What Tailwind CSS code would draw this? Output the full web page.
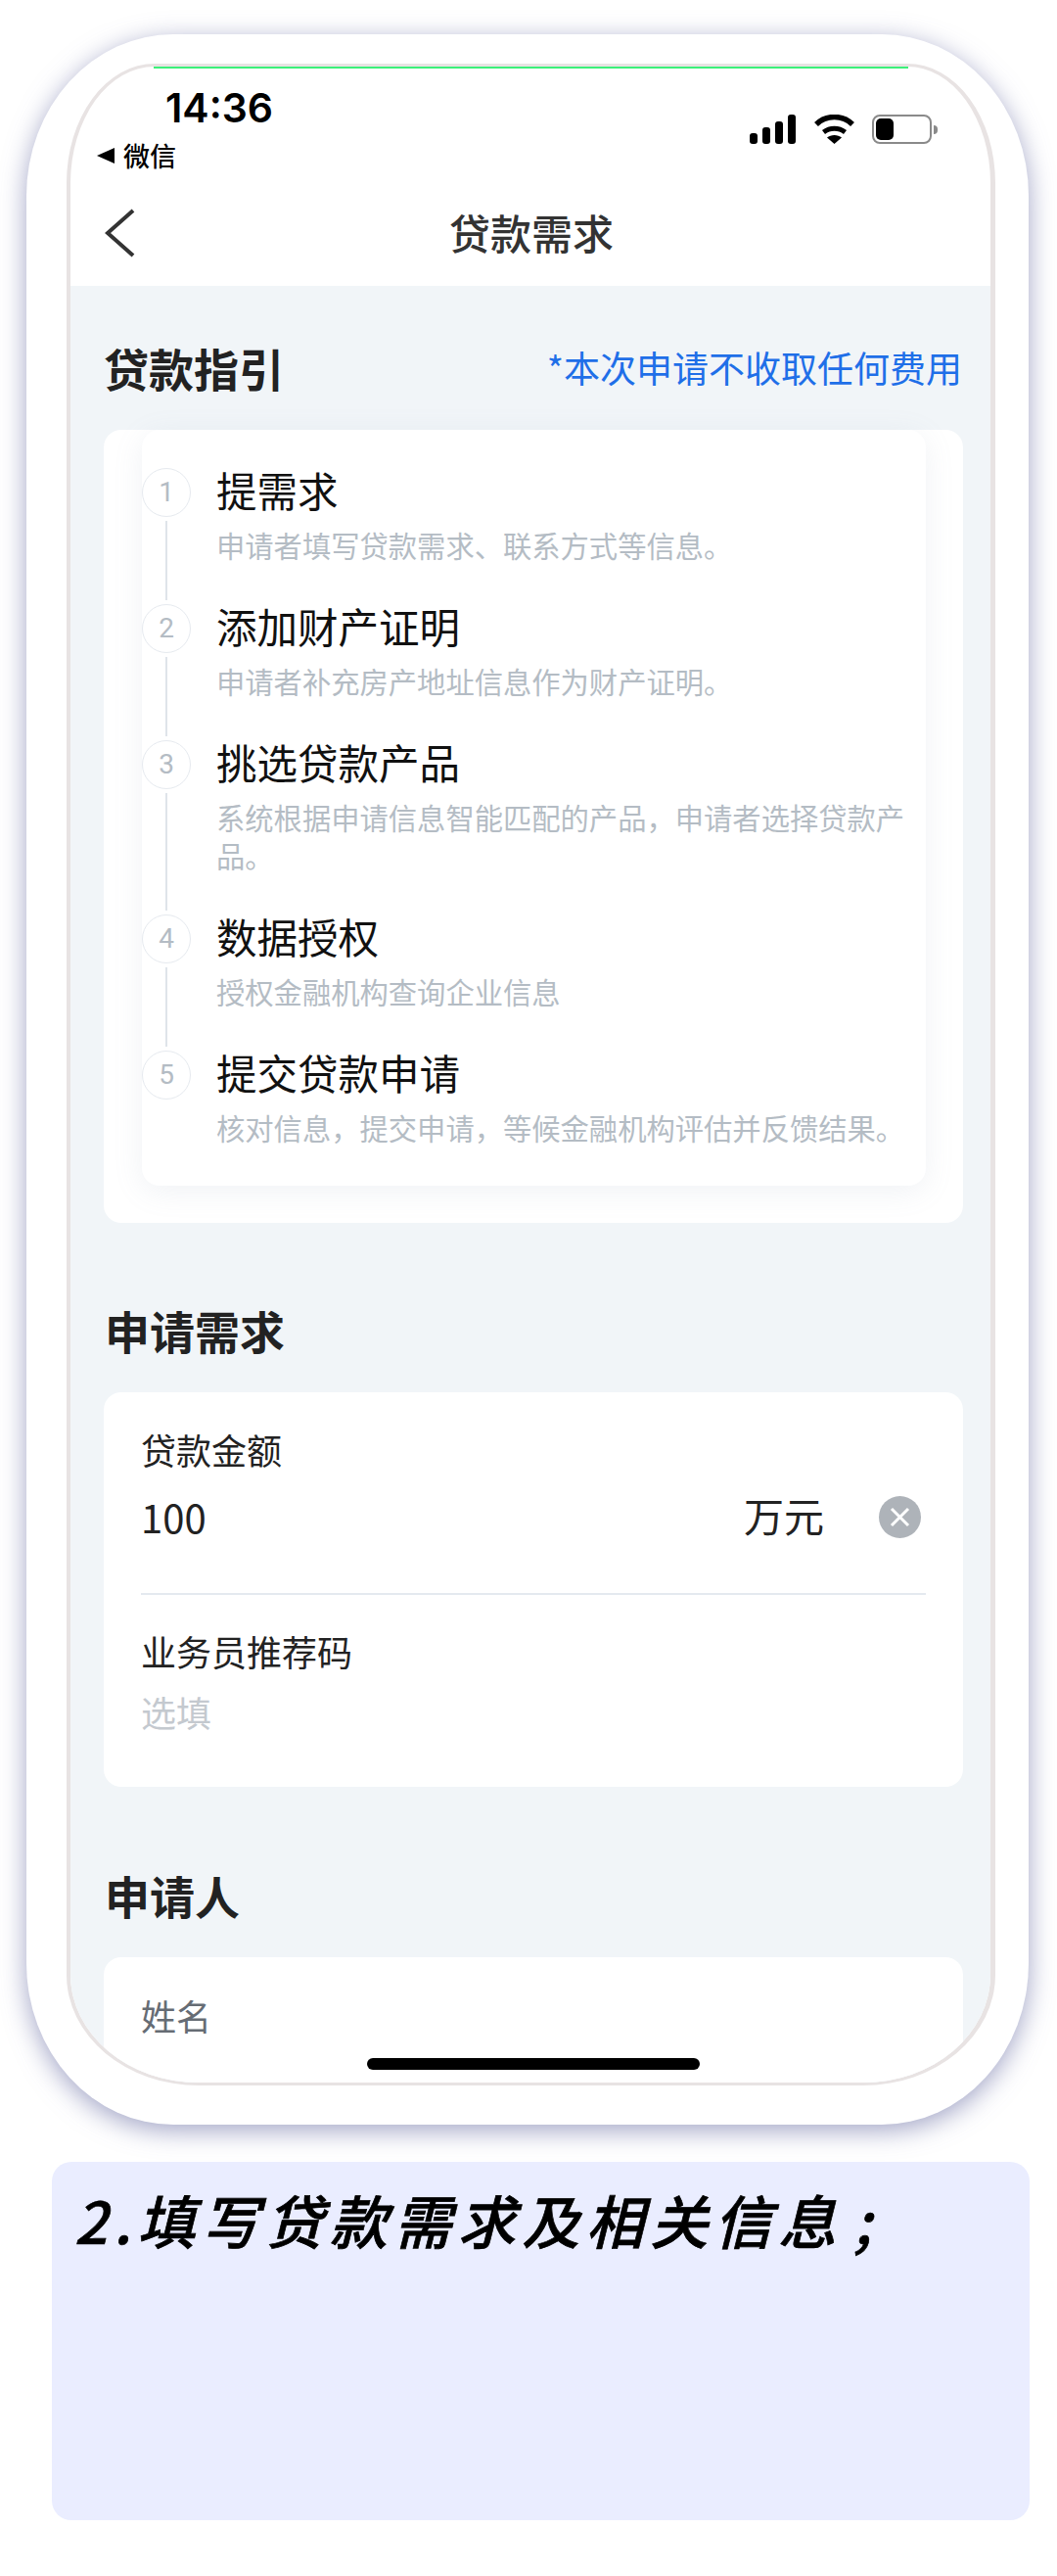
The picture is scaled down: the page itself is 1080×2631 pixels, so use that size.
<!DOCTYPE html>
<html lang="zh-CN">
<head>
    <meta charset="UTF-8">
    <meta name="viewport" content="width=device-width, initial-scale=1.0">
    <title>贷款需求</title>
    <script src="https://cdn.jsdelivr.net/npm/@tailwindcss/browser@4"></script>
</head>
<body class="bg-white w-[1080px] h-[2631px] overflow-hidden font-['Noto_Sans_CJK_SC','Liberation_Sans',sans-serif]">
    <!-- phone frame -->
    <div class="mt-[35px] ml-[27px] w-[1024px] h-[2135px] pt-[30px] pl-[41px] bg-white rounded-[150px/165px] shadow-[0_6px_26px_rgba(100,105,160,0.6)]">
        <div class="relative w-[949px] h-[2065px] overflow-hidden bg-white border-t-[3px] border-b-[3px] border-l-[4px] border-r-[5px] border-[#e8e3e3] rounded-[90px_90px_135px_135px/122px_122px_113px_113px] flex flex-col">
            <div class="absolute top-0 left-[85px] w-[771px] h-[2px] bg-[#3df07a]"></div>

            <!-- status bar -->
            <div class="h-[110px] flex justify-between shrink-0">
                <div class="pt-[18px]">
                    <div class="ml-[97px] text-[41px] leading-[48px] font-semibold text-black font-['Inter',sans-serif]">14:36</div>
                    <div class="mt-[7px] ml-[27px] flex items-center h-[36px]">
                        <div class="w-0 h-0 border-y-[8px] border-y-transparent border-r-[18px] border-r-black"></div>
                        <span class="ml-[9px] text-[27px] leading-[34px] font-medium text-black">微信</span>
                    </div>
                </div>
                <div class="pt-[49px] pr-[54px] flex items-start">
                    <div class="flex items-end gap-[5px] h-[30px]">
                        <div class="w-[8px] h-[11px] rounded-[3px] bg-black"></div>
                        <div class="w-[8px] h-[17px] rounded-[3px] bg-black"></div>
                        <div class="w-[8px] h-[23px] rounded-[3px] bg-black"></div>
                        <div class="w-[8px] h-[30px] rounded-[3px] bg-black"></div>
                    </div>
                    <svg class="ml-[19px]" width="41" height="30" viewBox="0 0 41 30" fill="none">
                        <path d="M2 10C12 0 29 0 39 10" stroke="#000" stroke-width="5.5"/>
                        <path d="M9.5 18C16 13 25 13 31.5 18" stroke="#000" stroke-width="5"/>
                        <path d="M13 23.5C17 20 24 20 28 23.5L20.5 30Z" fill="#000"/>
                    </svg>
                    <div class="ml-[18px] w-[61px] h-[30px] border-2 border-[#8a8a8a] rounded-[8px] p-[2px]">
                        <div class="w-[18px] h-full rounded-[5px] bg-black"></div>
                    </div>
                    <div class="ml-[2px] mt-[11px] w-[4px] h-[9px] rounded-r-full bg-[#8a8a8a]"></div>
                </div>
            </div>

            <!-- nav -->
            <div class="h-[114px] shrink-0 pt-[5px] grid grid-cols-[1fr_auto_1fr] items-center">
                <svg class="ml-[35px]" width="31" height="50" viewBox="0 0 31 50" fill="none">
                    <path d="M29 2L3 25L29 48" stroke="#333" stroke-width="4"/>
                </svg>
                <div class="ml-[2px] text-[42px] leading-[47px] mb-[3px] font-medium text-[#333]">贷款需求</div>
                <div></div>
            </div>

            <!-- content -->
            <div class="flex-1 bg-[#f1f5f8] pl-[34px] pr-[28px] pt-[56px]">
                <div class="flex items-start justify-between h-[60px] mb-[31px]">
                    <div class="text-[46px] leading-[54px] font-bold text-[#222]">贷款指引</div>
                    <div class="mr-[1px] text-[37px] leading-[54px] text-[#1f6fe8]">*本次申请不收取任何费用</div>
                </div>

                <!-- guide card -->
                <div class="bg-white rounded-[18px] pl-[39px] pr-[38px] pb-[38px]">
                    <div class="bg-white rounded-[18px] pt-[39px] pr-[5px] shadow-[0_6px_30px_rgba(130,145,170,0.12)]">
                        <div class="flex">
                            <div class="w-[50px] shrink-0 flex flex-col items-center">
                                <div class="w-[50px] h-[50px] shrink-0 rounded-full border-[1.5px] border-[#e6eaef] flex items-center justify-center text-[28px] text-[#b4bcc4] font-['Roboto',sans-serif]">1</div>
                                <div class="flex-1 w-[2.5px] my-[4px] bg-[#dfe4ea]"></div>
                            </div>
                            <div class="ml-[26px] pb-[41px]">
                                <div class="h-[50px] text-[41.5px] leading-[44px] text-[#111]">提需求</div>
                                <div class="mt-[9px] text-[29.3px] leading-[39px] text-[#b4bcc4]">申请者填写贷款需求、联系方式等信息。</div>
                            </div>
                        </div>
                        <div class="flex">
                            <div class="w-[50px] shrink-0 flex flex-col items-center">
                                <div class="w-[50px] h-[50px] shrink-0 rounded-full border-[1.5px] border-[#e6eaef] flex items-center justify-center text-[28px] text-[#b4bcc4] font-['Roboto',sans-serif]">2</div>
                                <div class="flex-1 w-[2.5px] my-[4px] bg-[#dfe4ea]"></div>
                            </div>
                            <div class="ml-[26px] pb-[41px]">
                                <div class="h-[50px] text-[41.5px] leading-[44px] text-[#111]">添加财产证明</div>
                                <div class="mt-[9px] text-[29.3px] leading-[39px] text-[#b4bcc4]">申请者补充房产地址信息作为财产证明。</div>
                            </div>
                        </div>
                        <div class="flex">
                            <div class="w-[50px] shrink-0 flex flex-col items-center">
                                <div class="w-[50px] h-[50px] shrink-0 rounded-full border-[1.5px] border-[#e6eaef] flex items-center justify-center text-[28px] text-[#b4bcc4] font-['Roboto',sans-serif]">3</div>
                                <div class="flex-1 w-[2.5px] my-[4px] bg-[#dfe4ea]"></div>
                            </div>
                            <div class="ml-[26px] pb-[41px]">
                                <div class="h-[50px] text-[41.5px] leading-[44px] text-[#111]">挑选贷款产品</div>
                                <div class="mt-[9px] text-[29.3px] leading-[39px] text-[#b4bcc4]">系统根据申请信息智能匹配的产品，申请者选择贷款产品。</div>
                            </div>
                        </div>
                        <div class="flex">
                            <div class="w-[50px] shrink-0 flex flex-col items-center">
                                <div class="w-[50px] h-[50px] shrink-0 rounded-full border-[1.5px] border-[#e6eaef] flex items-center justify-center text-[28px] text-[#b4bcc4] font-['Roboto',sans-serif]">4</div>
                                <div class="flex-1 w-[2.5px] my-[4px] bg-[#dfe4ea]"></div>
                            </div>
                            <div class="ml-[26px] pb-[41px]">
                                <div class="h-[50px] text-[41.5px] leading-[44px] text-[#111]">数据授权</div>
                                <div class="mt-[9px] text-[29.3px] leading-[39px] text-[#b4bcc4]">授权金融机构查询企业信息</div>
                            </div>
                        </div>
                        <div class="flex">
                            <div class="w-[50px] shrink-0 flex flex-col items-center">
                                <div class="w-[50px] h-[50px] shrink-0 rounded-full border-[1.5px] border-[#e6eaef] flex items-center justify-center text-[28px] text-[#b4bcc4] font-['Roboto',sans-serif]">5</div>
                            </div>
                            <div class="ml-[26px] pb-[40px]">
                                <div class="h-[50px] text-[41.5px] leading-[44px] text-[#111]">提交贷款申请</div>
                                <div class="mt-[9px] text-[29.3px] leading-[39px] text-[#b4bcc4]">核对信息，提交申请，等候金融机构评估并反馈结果。</div>
                            </div>
                        </div>
                    </div>
                </div>

                <div class="mt-[81px] mb-[36px] ml-[1px] text-[46px] leading-[56px] font-bold text-[#222]">申请需求</div>

                <!-- demand card -->
                <div class="bg-white rounded-[18px] px-[38px] pt-[34px] pb-[51px]">
                    <div class="text-[36px] leading-[48px] text-[#222]">贷款金额</div>
                    <div class="mt-[15px] h-[60px] flex items-center pr-[5px]">
                        <div class="flex-1 text-[40px] leading-[60px] text-[#222]">100</div>
                        <div class="text-[41px] leading-[56px] mb-[4px] text-[#222]">万元</div>
                        <div class="ml-[56px] w-[43px] h-[43px] rounded-full bg-[#aeb3b9] flex items-center justify-center">
                            <svg width="21" height="21" viewBox="0 0 21 21" fill="none">
                                <path d="M2 2L19 19M19 2L2 19" stroke="#fff" stroke-width="3"/>
                            </svg>
                        </div>
                    </div>
                    <div class="mt-[48px] h-[2px] bg-[#e4e9ef]"></div>
                    <div class="mt-[33px] text-[36px] leading-[48px] text-[#222]">业务员推荐码</div>
                    <div class="mt-[14px] text-[36px] leading-[48px] mb-[2px] text-[#c4c9cf]">选填</div>
                </div>

                <div class="mt-[82px] mb-[36px] ml-[1px] text-[46px] leading-[56px] font-bold text-[#222]">申请人</div>

                <!-- applicant card -->
                <div class="bg-white rounded-[18px] h-[200px] px-[38px] pt-[35px]">
                    <div class="text-[36px] leading-[48px] text-[#666c74]">姓名</div>
                </div>
            </div>

            <div class="absolute left-[303px] bottom-[13px] w-[340px] h-[12px] rounded-full bg-black"></div>
        </div>
    </div>

    <!-- caption -->
    <div class="mt-[38px] ml-[53px] w-[999px] h-[366px] bg-[#eaedff] rounded-[20px] pl-[23px] pt-[24px]">
        <div class="text-[59px] leading-[70px] font-medium italic tracking-[6.5px] text-black [-webkit-text-stroke:0.7px_black]">2.填写贷款需求及相关信息<span class="ml-[12px]">;</span></div>
    </div>
</body>
</html>
